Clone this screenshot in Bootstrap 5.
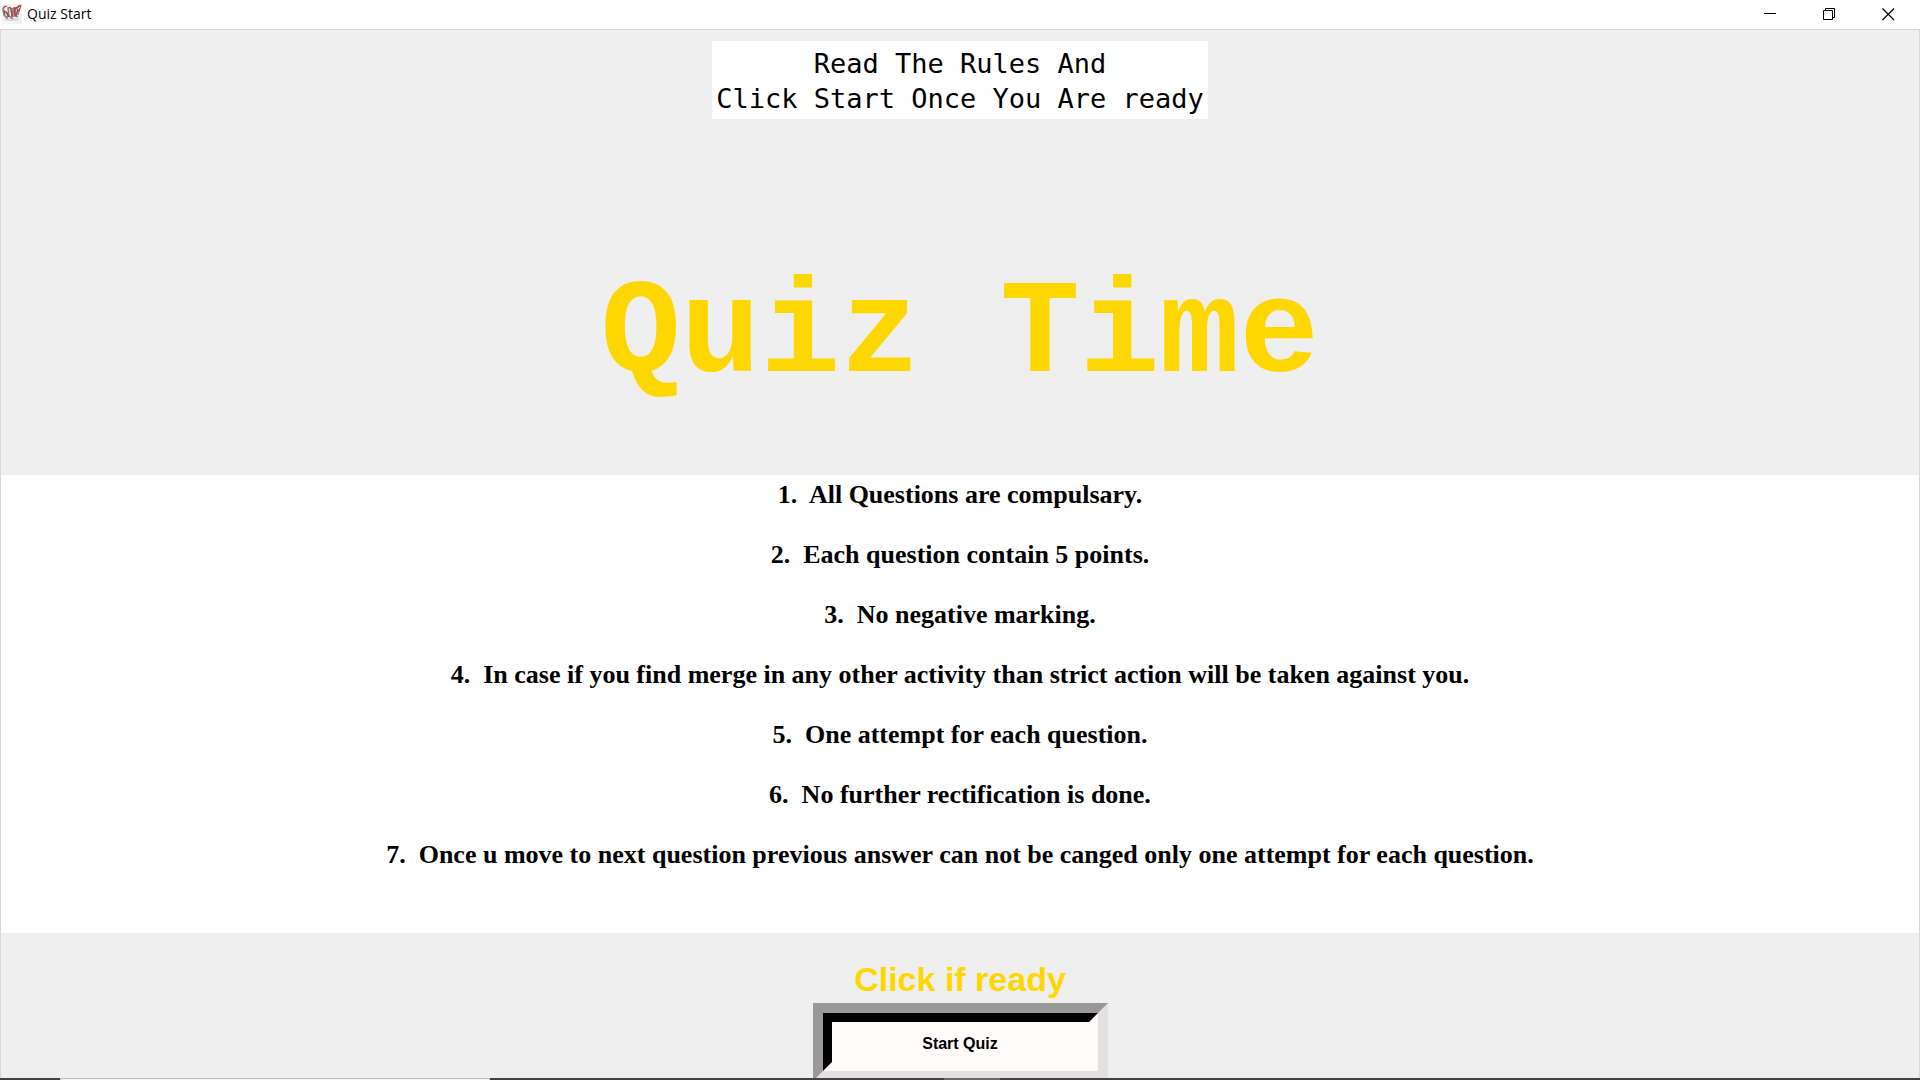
<!DOCTYPE html>
<html lang="en">
<head>
<meta charset="utf-8">
<meta name="viewport" content="width=device-width, initial-scale=1">
<title>Quiz Start</title>
<link href="https://cdn.jsdelivr.net/npm/bootstrap@5.3.0/dist/css/bootstrap.min.css" rel="stylesheet">
<style>
  .titlebar { height: 30px; border-bottom: 1px solid #d6d6d6; padding: 0 2px; }
  .titlebar-name { font: 14px/28px "Open Sans", "Noto Sans", sans-serif; color: #000; margin-left: 5px; }
  .win-btn { width: 59px; height: 28px; }
  .client { min-height: 0; background: #efefef; border: solid #d9d9d9; border-width: 0 1px; }
  .intro { font: 27px/35px "DejaVu Sans Mono", monospace; color: #000; padding: 5px 4px 3px; margin-top: 11px; }
  .banner { font: bold 133px/150px "Liberation Mono", monospace; color: #ffd700; margin: 142px 0 64px; }
  .rules { font: bold 26px/30px "Liberation Serif", serif; color: #000; padding: 5px 0 63px; gap: 30px; }
  .rules li { white-space: pre-wrap; }
  .ready { font: bold 34px/38px "Liberation Sans", sans-serif; color: #ffd700; margin: 27px 0 5px; }
  .start-btn { width: 295px; background: #fffafa; border: 10px solid; border-color: #999896 #e5e0e0 #e5e0e0 #999896; }
  .start-face { font: bold 16px/20px "Liberation Sans", sans-serif; color: #000; padding: 12px 0 8px; border: 9px solid; border-color: #000 #fffafa #fffafa #000; }
  .taskstrip { height: 2px; background: #434143; }
  .strip-search { width: 430px; margin-left: 60px; background: #f2f2f2; border: 1px solid #bebebe; border-bottom: 0; }
  .strip-active { width: 56px; margin-left: 454px; background: #6b696b; }
</style>
</head>
<body>
<div class="d-flex flex-column vh-100 overflow-hidden">
  <header class="titlebar d-flex justify-content-between flex-shrink-0 bg-white">
    <div class="d-flex">
      <svg width="20" height="20" viewBox="0 0 20 20" class="mt-1" aria-hidden="true">
        <rect width="20" height="20" fill="#f4f3f3"/>
        <ellipse cx="10" cy="15.500" rx="8" ry="1.500" fill="#dad7d7"/>
        <path d="M3 2L1 5l1 6 3 3 1-4-3-3M6 3l1 9 3 2V8L8 4M11 4v9M13 3l1 9 2 1M18 1l-3 3 1 4M17 6l-1 5" fill="none" stroke="#8d7f80" stroke-width="1.600"/>
        <path d="M2 3l3-1M2 6l1 5M4 8l3 5M7 3l3 2M9 6l1 6M12 3l1 10M13 5l4-3M16 5l-2 7M19 1l-2 6" fill="none" stroke="#b23a42" stroke-width="1.200"/>
      </svg>
      <span class="titlebar-name">Quiz Start</span>
    </div>
    <div class="d-flex">
      <button type="button" class="win-btn btn p-0 border-0 rounded-0 d-flex justify-content-center align-items-center" aria-label="Minimize"><svg width="13" height="13" viewBox="0 0 13 13"><path d="M0 5.500h12" stroke="#000"/></svg></button>
      <button type="button" class="win-btn btn p-0 border-0 rounded-0 d-flex justify-content-center align-items-center" aria-label="Restore"><svg width="13" height="13" viewBox="0 0 13 13" fill="none" stroke="#000"><path d="M.5 2.500h9v9h-9zM2.500 2.500v-2h9v9h-2"/></svg></button>
      <button type="button" class="win-btn btn p-0 border-0 rounded-0 d-flex justify-content-center align-items-center" aria-label="Close"><svg width="13" height="13" viewBox="0 0 13 13"><path d="M.5 .5l11.500 11.500M12 .5L.5 12" stroke="#000" stroke-width="1.200"/></svg></button>
    </div>
  </header>
  <main class="client flex-grow-1 d-flex flex-column align-items-center overflow-hidden">
    <p class="intro bg-white text-center mb-0">Read The Rules And<br>Click Start Once You Are ready</p>
    <h1 class="banner text-center">Quiz Time</h1>
    <ol class="rules list-unstyled d-flex flex-column w-100 bg-white text-center mb-0">
      <li>1.  All Questions are compulsary.</li>
      <li>2.  Each question contain 5 points.</li>
      <li>3.  No negative marking.</li>
      <li>4.  In case if you find merge in any other activity than strict action will be taken against you.</li>
      <li>5.  One attempt for each question.</li>
      <li>6.  No further rectification is done.</li>
      <li>7.  Once u move to next question previous answer can not be canged only one attempt for each question.</li>
    </ol>
    <p class="ready">Click if ready</p>
    <button type="button" class="start-btn p-0 flex-shrink-0"><span class="start-face d-block">Start Quiz</span></button>
  </main>
  <footer class="taskstrip d-flex flex-shrink-0"><div class="strip-search"></div><div class="strip-active"></div></footer>
</div>
<script src="https://cdn.jsdelivr.net/npm/bootstrap@5.3.0/dist/js/bootstrap.bundle.min.js"></script>
</body>
</html>
